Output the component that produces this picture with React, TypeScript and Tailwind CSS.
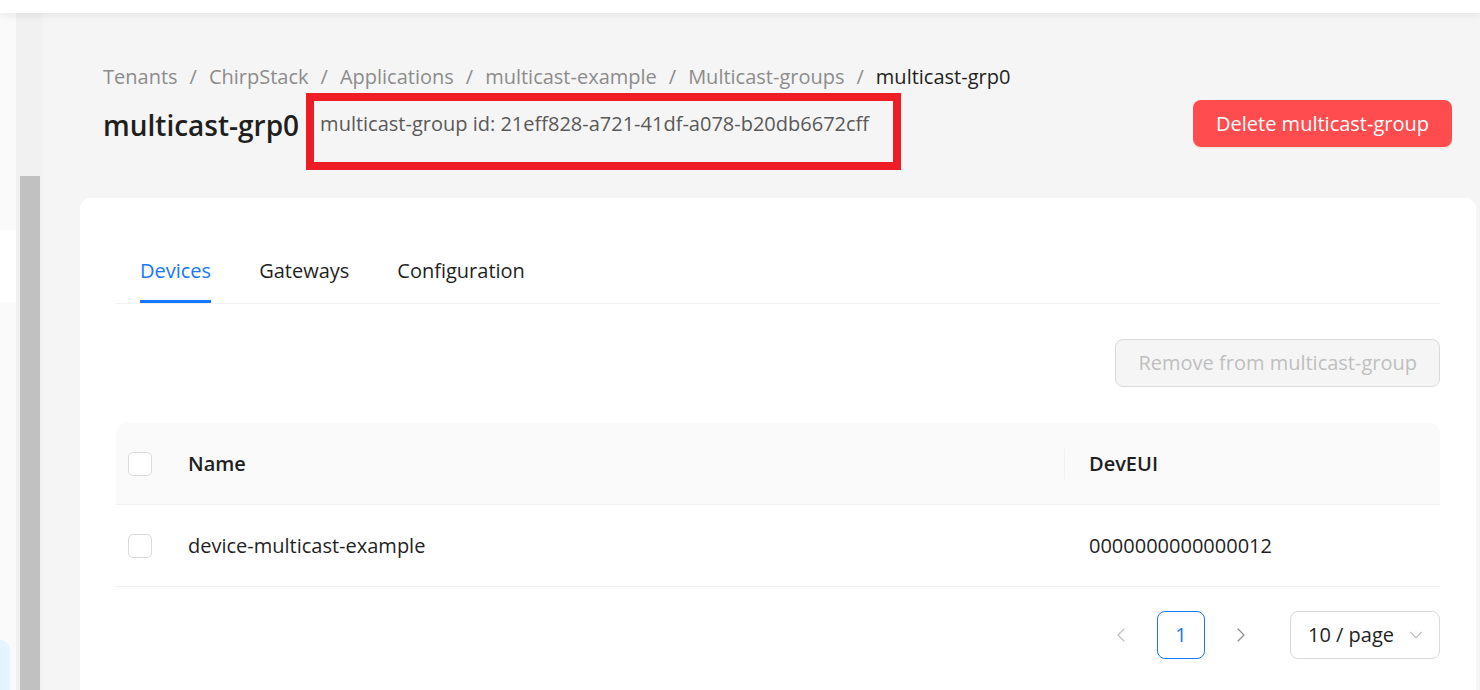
import { ChevronDown, ChevronLeft, ChevronRight } from 'lucide-react'

const CRUMBS = ['Tenants', 'ChirpStack', 'Applications', 'multicast-example', 'Multicast-groups']

const ROWS = [{ name: 'device-multicast-example', devEui: '0000000000000012' }]

export default function App() {
  return (
    <div
      className="flex h-[690px] w-[1480px] flex-col overflow-hidden bg-[#f5f5f5] text-[#1f1f1f]"
      style={{ fontFamily: '"Open Sans", "Noto Sans", sans-serif' }}
    >
      <header className="relative z-10 h-[13px] shrink-0 bg-white shadow-[0_2px_8px_rgba(0,0,0,0.08)]" />

      <div className="flex min-h-0 flex-1">
        <aside className="flex w-[17px] shrink-0 flex-col border-r border-[#f0f0f0] bg-[#fafafa]">
          <div className="h-[217px] shrink-0" />
          <div className="h-[72px] shrink-0 bg-white" />
          <div className="flex-1" />
          <div className="mr-[6px] h-[50px] shrink-0 rounded-tr-[10px] bg-[#e6f4ff]" />
        </aside>

        <div className="flex w-[26px] shrink-0 flex-col bg-[#f1f1f1] px-[3px] pt-[163px]">
          <div className="flex-1 bg-[#c1c1c1]" />
        </div>

        <main className="min-w-0 flex-1 pl-[37px] pr-[4px]">
          <div className="pl-[23px] pr-[24px] pt-[50px]">
            <nav className="flex items-center text-[20px] leading-[28px] text-[#8c8c8c]">
              {CRUMBS.map((crumb) => (
                <span key={crumb} className="flex items-center">
                  <span>{crumb}</span>
                  <span className="px-[12px]">/</span>
                </span>
              ))}
              <span className="text-[#1f1f1f]">multicast-grp0</span>
            </nav>

            <div className="mt-[7px] flex items-start justify-between">
              <div className="flex items-start">
                <h1 className="mt-[7px] text-[28px] font-semibold leading-[40px]">multicast-grp0</h1>
                <div className="-mt-[5px] ml-[7px] h-[77px] w-[595px] border-[8px] border-[#ee1c25] pl-[6px] pt-[9px] text-[20px] leading-[28px] text-[#595959]">
                  multicast-group id: 21eff828-a721-41df-a078-b20db6672cff
                </div>
              </div>
              <button className="mt-[2px] h-[47px] rounded-[8px] bg-[#ff4d4f] px-[23px] text-[20px] text-white shadow-[0_2px_0_rgba(255,38,5,0.06)]">
                Delete multicast-group
              </button>
            </div>
          </div>

          <section className="mt-[28px] rounded-t-[10px] bg-white px-[36px] pt-[47px] pb-[40px]">
            <div className="flex border-b border-[#f0f0f0] pl-[24px] text-[20px]">
              <Tab label="Devices" active />
              <Tab label="Gateways" />
              <Tab label="Configuration" />
            </div>

            <div className="mt-[35px] flex justify-end">
              <button
                disabled
                className="h-[48px] rounded-[8px] border border-[#d9d9d9] bg-[#f5f5f5] px-[22px] text-[20px] text-[#bfbfbf]"
              >
                Remove from multicast-group
              </button>
            </div>

            <table className="mt-[36px] w-full border-separate border-spacing-0 text-[20px]">
              <thead>
                <tr className="bg-[#fafafa]">
                  <th className="h-[82px] w-[72px] rounded-tl-[10px] border-b border-[#f0f0f0] pl-[12px] text-left">
                    <Checkbox />
                  </th>
                  <th className="relative border-b border-[#f0f0f0] text-left font-semibold">
                    Name
                    <span className="absolute right-0 top-1/2 h-[30px] w-px -translate-y-1/2 bg-[#f0f0f0]" />
                  </th>
                  <th className="w-[375px] rounded-tr-[10px] border-b border-[#f0f0f0] pl-[24px] text-left font-semibold">
                    DevEUI
                  </th>
                </tr>
              </thead>
              <tbody>
                {ROWS.map((row) => (
                  <tr key={row.devEui}>
                    <td className="h-[82px] border-b border-[#f0f0f0] pl-[12px]">
                      <Checkbox />
                    </td>
                    <td className="border-b border-[#f0f0f0]">{row.name}</td>
                    <td className="border-b border-[#f0f0f0] pl-[24px]">{row.devEui}</td>
                  </tr>
                ))}
              </tbody>
            </table>

            <div className="mt-[24px] flex items-center justify-end text-[20px]">
              <span className="flex h-[48px] w-[48px] items-center justify-center text-[#bfbfbf]">
                <ChevronLeft size={24} strokeWidth={1.2} />
              </span>
              <span className="ml-[12px] flex h-[48px] w-[48px] items-center justify-center rounded-[8px] border border-[#1677ff] text-[#1677ff]">
                1
              </span>
              <span className="ml-[12px] flex h-[48px] w-[48px] items-center justify-center text-[#8c8c8c]">
                <ChevronRight size={24} strokeWidth={1.2} />
              </span>
              <div className="ml-[25px] flex h-[48px] w-[150px] items-center justify-between rounded-[8px] border border-[#d9d9d9] pl-[17px] pr-[12px]">
                <span>10 / page</span>
                <ChevronDown size={22} strokeWidth={1.2} className="text-[#bfbfbf]" />
              </div>
            </div>
          </section>
        </main>
      </div>
    </div>
  )
}

function Tab({ label, active = false }: { label: string; active?: boolean }) {
  return (
    <div
      className={`mr-[48px] border-b-[3px] pb-[15px] pt-[12px] leading-[28px] ${
        active ? 'border-[#1677ff] text-[#1677ff]' : 'border-transparent'
      }`}
    >
      {label}
    </div>
  )
}

function Checkbox() {
  return <span className="block h-[24px] w-[24px] rounded-[5px] border border-[#d9d9d9] bg-white" />
}
